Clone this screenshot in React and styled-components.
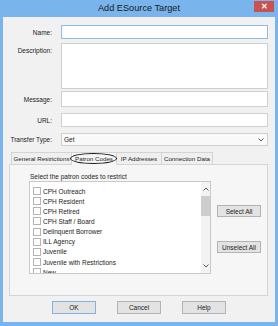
import React from "react";
import styled, { createGlobalStyle } from "styled-components";

const Global = createGlobalStyle`
  html, body { margin: 0; padding: 0; background: #ffffff; }
  body { font-family: "Liberation Sans", Arial, sans-serif; }
  * { box-sizing: border-box; }
`;

const Window = styled.div`
  width: 278px;
  height: 326px;
  background: #79b4ec;
  padding: 0 3px 4px 3px;
  display: flex;
  flex-direction: column;
`;

const TitleBar = styled.div`
  height: 17px;
  display: grid;
  grid-template-columns: 1fr auto 1fr;
  align-items: start;
`;

const Title = styled.div`
  grid-column: 2;
  font-size: 9.2px;
  line-height: 17px;
  color: #1a1a1a;
`;

const Close = styled.div`
  grid-column: 3;
  justify-self: end;
  margin-top: 1px;
  margin-right: 1px;
  width: 20px;
  height: 11px;
  background: #c9514f;
  color: #ffffff;
  font-size: 8px;
  font-weight: bold;
  line-height: 11px;
  text-align: center;
`;

const Client = styled.div`
  flex: 1;
  background: #f1f1f1;
  padding: 8px 0 7px 0;
  display: flex;
  flex-direction: column;
`;

const Form = styled.div`
  display: grid;
  grid-template-columns: 49px 1fr;
  column-gap: 9px;
  padding-right: 7px;
`;

const Label = styled.div`
  font-size: 6.5px;
  color: #222;
  text-align: right;
  white-space: nowrap;
  align-self: ${(p) => (p.$top ? "start" : "center")};
  padding-top: ${(p) => (p.$top ? "4px" : "0")};
  margin-top: ${(p) => p.$mt || 0}px;
`;

const TextBox = styled.div`
  height: ${(p) => p.$h}px;
  margin-top: ${(p) => p.$mt || 0}px;
  background: #ffffff;
  border: 1px solid ${(p) => (p.$focus ? "#8cbcec" : "#cfcfcf")};
`;

const Select = styled.div`
  height: 13px;
  margin-top: ${(p) => p.$mt || 0}px;
  background: #f9f9f9;
  border: 1px solid #cfcfcf;
  display: flex;
  align-items: center;
  justify-content: space-between;
  padding: 0 3px 0 2px;
  font-size: 6.5px;
  color: #222;
`;

const Tabs = styled.div`
  margin: 6px 7px 0 6px;
  display: flex;
  flex-direction: column;
`;

const TabStrip = styled.div`
  display: flex;
  height: 13px;
  padding-left: 2px;
`;

const Tab = styled.div`
  position: relative;
  width: ${(p) => p.$w}px;
  border: 1px solid #d4d4d4;
  border-left-width: ${(p) => (p.$first ? 1 : 0)}px;
  border-bottom-color: ${(p) => (p.$active ? "#f6f6f6" : "#d4d4d4")};
  background: ${(p) => (p.$active ? "#f6f6f6" : "#efefef")};
  font-size: 6.2px;
  color: #222;
  display: flex;
  align-items: center;
  justify-content: center;
  white-space: nowrap;
  overflow: visible;

  ${(p) =>
    p.$circled &&
    `
    &::after {
      content: "";
      position: absolute;
      left: -2px;
      right: -1px;
      top: 0px;
      bottom: 0px;
      border: 1.4px solid #151515;
      border-radius: 50%;
    }
  `}
`;

const Panel = styled.div`
  height: 132px;
  margin-top: -1px;
  background: #f6f6f6;
  border: 1px solid #d4d4d4;
  padding: 8px 6px 0 19px;
  display: flex;
  flex-direction: column;
`;

const Caption = styled.div`
  font-size: 6.5px;
  color: #222;
  line-height: 8px;
  margin-left: 1px;
`;

const PickRow = styled.div`
  display: flex;
  gap: 6px;
  margin-top: 0px;
`;

const ListBox = styled.div`
  width: 184px;
  height: 93px;
  background: #ffffff;
  border: 1px solid #c9c9c9;
  display: grid;
  grid-template-columns: 1fr 9px;
  overflow: hidden;
`;

const Items = styled.div`
  padding-top: 4px;
  overflow: hidden;
`;

const Item = styled.div`
  height: 10.15px;
  display: flex;
  align-items: center;
  gap: 2px;
  padding-left: 3px;
  font-size: 6.5px;
  color: #222;
  white-space: nowrap;
`;

const Check = styled.span`
  width: 8px;
  height: 8px;
  flex: none;
  background: #ffffff;
  border: 1px solid #b4b4b4;
`;

const ScrollBar = styled.div`
  background: #f3f3f3;
  display: flex;
  flex-direction: column;
  align-items: center;
`;

const Arrow = styled.div`
  height: 14px;
  width: 100%;
  display: flex;
  align-items: center;
  justify-content: center;
  flex: none;
`;

const Thumb = styled.div`
  width: 100%;
  height: 20px;
  background: #cdcdcd;
  flex: none;
`;

const Spacer = styled.div`
  flex: 1;
`;

const SideButtons = styled.div`
  flex: 1;
  display: flex;
  flex-direction: column;
  padding-top: 24px;
  gap: 24px;
`;

const Button = styled.div`
  width: 44px;
  height: ${(p) => p.$h || 12}px;
  background: #e3e3e3;
  border: 1px solid ${(p) => (p.$default ? "#7fb2e2" : "#b3b3b3")};
  font-size: 6.5px;
  color: #222;
  display: flex;
  align-items: center;
  justify-content: center;
`;

const ButtonBar = styled.div`
  margin-top: 5px;
  display: flex;
  justify-content: center;
  gap: 21px;
`;

const Chevron = ({ up }) => (
  <svg width="6" height="4" viewBox="0 0 6 4">
    <path
      d={up ? "M0.5 3.5 L3 1 L5.5 3.5" : "M0.5 0.5 L3 3 L5.5 0.5"}
      fill="none"
      stroke="#555"
      strokeWidth="1"
    />
  </svg>
);

const codes = [
  "CPH Outreach",
  "CPH Resident",
  "CPH Retired",
  "CPH Staff / Board",
  "Delinquent Borrower",
  "ILL Agency",
  "Juvenile",
  "Juvenile with Restrictions",
  "New",
];

export default function App() {
  return (
    <>
      <Global />
      <Window>
        <TitleBar>
          <Title>Add ESource Target</Title>
          <Close>✕</Close>
        </TitleBar>
        <Client>
          <Form>
            <Label>Name:</Label>
            <TextBox $h={14} $focus />
            <Label $top $mt={4}>Description:</Label>
            <TextBox $h={46} $mt={4} />
            <Label $mt={2}>Message:</Label>
            <TextBox $h={16} $mt={2} />
            <Label $mt={6}>URL:</Label>
            <TextBox $h={14} $mt={6} />
            <Label $mt={6}>Transfer Type:</Label>
            <Select $mt={6}>
              <span>Get</span>
              <Chevron />
            </Select>
          </Form>
          <Tabs>
            <TabStrip>
              <Tab $w={61} $first>General Restrictions</Tab>
              <Tab $w={45} $active $circled>Patron Codes</Tab>
              <Tab $w={45}>IP Addresses</Tab>
              <Tab $w={51}>Connection Data</Tab>
            </TabStrip>
            <Panel>
              <Caption>Select the patron codes to restrict</Caption>
              <PickRow>
                <ListBox>
                  <Items>
                    {codes.map((c) => (
                      <Item key={c}>
                        <Check />
                        <span>{c}</span>
                      </Item>
                    ))}
                  </Items>
                  <ScrollBar>
                    <Arrow>
                      <Chevron up />
                    </Arrow>
                    <Thumb />
                    <Spacer />
                    <Arrow>
                      <Chevron />
                    </Arrow>
                  </ScrollBar>
                </ListBox>
                <SideButtons>
                  <Button>Select All</Button>
                  <Button>Unselect All</Button>
                </SideButtons>
              </PickRow>
            </Panel>
          </Tabs>
          <ButtonBar>
            <Button $h={13} $default>OK</Button>
            <Button $h={13}>Cancel</Button>
            <Button $h={13}>Help</Button>
          </ButtonBar>
        </Client>
      </Window>
    </>
  );
}
